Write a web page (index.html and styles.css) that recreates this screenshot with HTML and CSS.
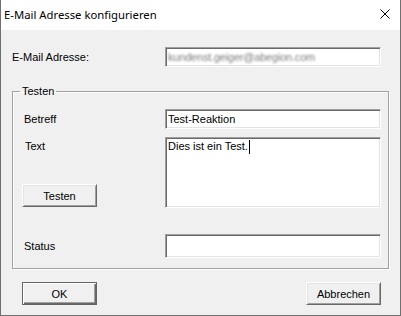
FILE: index.html
```html
<!DOCTYPE html>
<html lang="de">
<head>
  <meta charset="UTF-8" />
  <title>E-Mail Adresse konfigurieren</title>
  <link rel="stylesheet" href="styles.css">
</head>
<body>

<div class="dialog">
  <div class="titlebar">
    <span class="title">E-Mail Adresse konfigurieren</span>
    <span class="close">
      <svg width="10" height="10" viewBox="0 0 10 10"><path d="M0.5 0.5L9.5 9.5M9.5 0.5L0.5 9.5" stroke="#000" stroke-width="1" fill="none"/></svg>
    </span>
  </div>

  <div class="content">
    <div class="row">
      <label class="lbl">E-Mail Adresse:</label>
      <div class="field"><span class="blurred">kundenst.geiger@abegion.com</span></div>
    </div>

    <!-- Testbereich -->
    <fieldset class="group">
      <legend>Testen</legend>
      <div class="row">
        <label class="lbl">Betreff</label>
        <div class="field">Test-Reaktion</div>
      </div>
      <div class="row text-row">
        <div class="side">
          <label class="lbl-text">Text</label>
          <button class="btn side-btn">Testen</button>
        </div>
        <div class="field area">Dies ist ein Test.<span class="caret"></span></div>
      </div>
      <div class="row status-row">
        <label class="lbl">Status</label>
        <div class="field status"></div>
      </div>
    </fieldset>

    <div class="actions">
      <button class="btn default">OK</button>
      <button class="btn">Abbrechen</button>
    </div>
  </div>
</div>

</body>
</html>
```

FILE: styles.css
```css
body {
  margin:0; background:#f0f0f0; color:#000;
  font-family: "Liberation Sans", Arial, sans-serif; font-size:11px;
}
.dialog {
  width:401px; height:316px; box-sizing:border-box;
  border:1px solid #707070; border-top:none;
  background:#f0f0f0;
  display:flex; flex-direction:column;
}
.titlebar {
  height:30px; box-sizing:border-box;
  background:#fff;
  display:flex; align-items:center; justify-content:space-between;
  padding:0 10px 2px 3px;
}
.title {
  font-family: "Noto Sans", "Open Sans", sans-serif; font-size:11.3px;
}
.close svg {
  display:block;
}
.content {
  padding:17px 0 0 11px;
}
.row {
  display:flex; align-items:center;
}
.lbl {
  width:153px;
}
.group .lbl {
  width:141px;
}
.field {
  box-sizing:border-box;
  width:216px; height:20px;
  padding:0 2px;
  background:#fff;
  border:1px solid; border-color:#a0a0a0 #fff #fff #a0a0a0;
  box-shadow: inset 1px 1px 0 #696969, inset -1px -1px 0 #e3e3e3;
  display:flex; align-items:center;
  white-space:nowrap; overflow:hidden;
}
.blurred {
  color:#7d7d7d; filter: blur(1px); letter-spacing:-0.2px;
}
.group {
  margin:18px 0 0 0; padding:11px 6px 10px 11px;
  width:377px; box-sizing:border-box; min-width:0;
  border:1px solid #a0a0a0;
  box-shadow: inset 1px 1px 0 #fff, 1px 1px 0 #fff;
}
.group legend {
  padding:0 2px; margin-left:-4px;
  line-height:13px;
}
.text-row {
  margin-top:8px; align-items:stretch;
}
.side {
  width:141px;
  display:flex; flex-direction:column; justify-content:space-between;
}
.lbl-text {
  padding:3px 0 0 1px;
}
.side-btn {
  margin:0 0 1px -2px;
}
.field.area {
  height:71px; align-items:flex-start; padding-top:2px;
}
.caret {
  display:inline-block; width:1px; height:14px; background:#000;
  margin-left:1px; vertical-align:-3px;
}
.status-row {
  margin-top:26px;
}
.field.status {
  height:24px;
}
.actions {
  display:flex; justify-content:space-between;
  margin-top:13px; padding:0 19px 0 10px;
}
.btn {
  width:75px; height:23px; box-sizing:border-box;
  font-family:inherit; font-size:11px; color:#000;
  background:#f0f0f0;
  border:1px solid; border-color:#fff #696969 #696969 #fff;
  box-shadow: inset 1px 1px 0 #e3e3e3, inset -1px -1px 0 #a0a0a0;
  padding:0;
}
.btn.default {
  border:1px solid #646464;
  box-shadow: inset 1px 1px 0 #fff, inset -1px -1px 0 #696969, inset -2px -2px 0 #a0a0a0;
}
```
